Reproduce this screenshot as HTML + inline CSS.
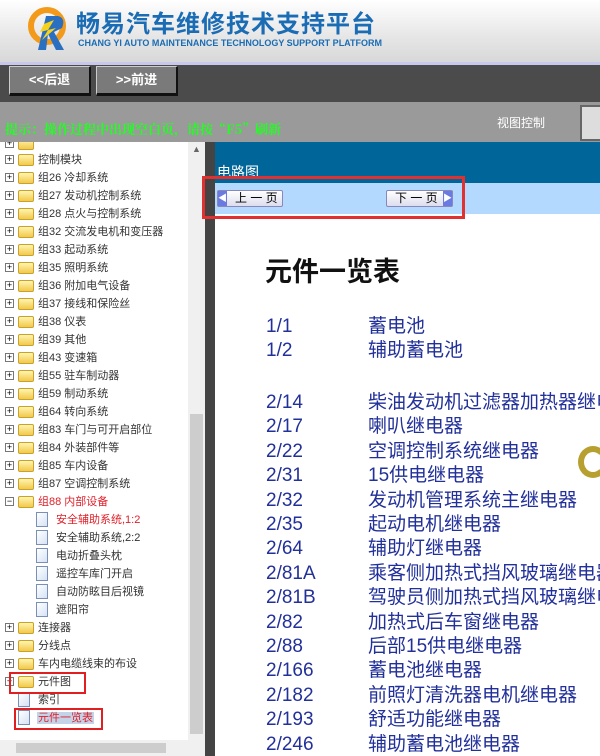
<!DOCTYPE html>
<html><head><meta charset="utf-8"><style>
*{margin:0;padding:0;box-sizing:border-box}
body{width:600px;height:756px;overflow:hidden;position:relative;font-family:"Liberation Sans","Noto Sans CJK SC",sans-serif;background:#fff}
.a{position:absolute}
#hdr{left:0;top:0;width:600px;height:62px;background:linear-gradient(#fff,#e6e6e6 60%,#d8d8d8)}
#tb{left:0;top:62px;width:600px;height:40px;background:#4b4b4b;border-top:3px solid #c8c8ee}
.btn{top:66px;height:30px;width:82px;background:#7a7a7a;border-top:1px solid #ccc;border-left:1px solid #ccc;border-right:2px solid #111;border-bottom:3px solid #111;color:#fff;font-size:13px;font-weight:bold;text-align:center;line-height:26px}
#hint{left:0;top:102px;width:600px;height:40px;background:#9a9a9a}
.tree{left:0;top:142px;width:188px;height:614px;background:#fff;overflow:hidden}
.row{position:absolute;left:0;height:18px;font-size:11px;color:#333;white-space:nowrap;line-height:18px}
.pb{position:absolute;left:5px;top:4px;width:9px;height:9px;border:1px solid #777;background:#fff;font-size:9px;line-height:7px;text-align:center;color:#000}
.fd{position:absolute;left:18px;top:3px;width:16px;height:12px;background:linear-gradient(#fff5b0,#f2c94c);border:1px solid #c9a22a;border-radius:2px}
.doc{position:absolute;width:12px;height:15px;top:1px;background:linear-gradient(135deg,#fff,#d6e2f5);border:1px solid #7a8fb5}
.lst{left:51px;font-size:19px;color:#22309a;line-height:24px}
#rc{left:215px;top:142px;width:385px;height:614px;overflow:hidden;background:#fff}
</style></head><body>
<div class="a" id="hdr">
 <svg class="a" style="left:24px;top:6px" width="46" height="46" viewBox="0 0 46 46"><circle cx="23" cy="20" r="16" fill="none" stroke="#f39a1a" stroke-width="6"/><path d="M14 44 L22 10 L34 10 Q42 12 38 22 L30 26 L40 44 L32 44 L24 28 L22 44Z" fill="#2b6fc0"/><path d="M20 18 L30 14 L24 24 L32 22 L18 34 L24 24 L16 26Z" fill="#f7d21a"/></svg>
 <div class="a" style="left:76px;top:4px;font-size:24px;font-weight:bold;color:#1a6cb5;letter-spacing:1px;font-family:'Noto Sans CJK SC',sans-serif">畅易汽车维修技术支持平台</div>
 <div class="a" style="left:78px;top:38px;font-size:9px;font-weight:bold;color:#1a6cb5;letter-spacing:0">CHANG YI AUTO MAINTENANCE TECHNOLOGY SUPPORT PLATFORM</div>
</div>
<div class="a" id="tb"></div>
<div class="a btn" style="left:9px">&lt;&lt;后退</div>
<div class="a btn" style="left:96px">&gt;&gt;前进</div>
<div class="a" id="hint">
 <div class="a" style="left:5px;top:17px;font-size:13px;font-weight:bold;color:#2f2;font-family:'Noto Serif CJK SC',serif">提示：操作过程中出现空白页，请按“F5”刷新</div>
 <div class="a" style="left:497px;top:12px;font-size:12px;color:#fff">视图控制</div>
 <div class="a" style="left:580px;top:3px;width:20px;height:36px;background:#ddd;border:2px solid #666;border-right:none"></div>
</div>
<div class="a tree">
<div class="row" style="top:-7px"><span class="pb">+</span><span class="fd"></span></div>
<div class="row" style="top:9px"><span class="pb">+</span><span class="fd"></span><span style="margin-left:38px">控制模块</span></div>
<div class="row" style="top:27px"><span class="pb">+</span><span class="fd"></span><span style="margin-left:38px">组26 冷却系统</span></div>
<div class="row" style="top:45px"><span class="pb">+</span><span class="fd"></span><span style="margin-left:38px">组27 发动机控制系统</span></div>
<div class="row" style="top:63px"><span class="pb">+</span><span class="fd"></span><span style="margin-left:38px">组28 点火与控制系统</span></div>
<div class="row" style="top:81px"><span class="pb">+</span><span class="fd"></span><span style="margin-left:38px">组32 交流发电机和变压器</span></div>
<div class="row" style="top:99px"><span class="pb">+</span><span class="fd"></span><span style="margin-left:38px">组33 起动系统</span></div>
<div class="row" style="top:117px"><span class="pb">+</span><span class="fd"></span><span style="margin-left:38px">组35 照明系统</span></div>
<div class="row" style="top:135px"><span class="pb">+</span><span class="fd"></span><span style="margin-left:38px">组36 附加电气设备</span></div>
<div class="row" style="top:153px"><span class="pb">+</span><span class="fd"></span><span style="margin-left:38px">组37 接线和保险丝</span></div>
<div class="row" style="top:171px"><span class="pb">+</span><span class="fd"></span><span style="margin-left:38px">组38 仪表</span></div>
<div class="row" style="top:189px"><span class="pb">+</span><span class="fd"></span><span style="margin-left:38px">组39 其他</span></div>
<div class="row" style="top:207px"><span class="pb">+</span><span class="fd"></span><span style="margin-left:38px">组43 变速箱</span></div>
<div class="row" style="top:225px"><span class="pb">+</span><span class="fd"></span><span style="margin-left:38px">组55 驻车制动器</span></div>
<div class="row" style="top:243px"><span class="pb">+</span><span class="fd"></span><span style="margin-left:38px">组59 制动系统</span></div>
<div class="row" style="top:261px"><span class="pb">+</span><span class="fd"></span><span style="margin-left:38px">组64 转向系统</span></div>
<div class="row" style="top:279px"><span class="pb">+</span><span class="fd"></span><span style="margin-left:38px">组83 车门与可开启部位</span></div>
<div class="row" style="top:297px"><span class="pb">+</span><span class="fd"></span><span style="margin-left:38px">组84 外装部件等</span></div>
<div class="row" style="top:315px"><span class="pb">+</span><span class="fd"></span><span style="margin-left:38px">组85 车内设备</span></div>
<div class="row" style="top:333px"><span class="pb">+</span><span class="fd"></span><span style="margin-left:38px">组87 空调控制系统</span></div>
<div class="row" style="top:351px;color:#e0202a"><span class="pb">−</span><span class="fd"></span><span style="margin-left:38px">组88 内部设备</span></div>
<div class="row" style="top:369px;color:#e0202a"><span class="doc" style="left:36px"></span><span style="margin-left:56px">安全辅助系统,1:2</span></div>
<div class="row" style="top:387px"><span class="doc" style="left:36px"></span><span style="margin-left:56px">安全辅助系统,2:2</span></div>
<div class="row" style="top:405px"><span class="doc" style="left:36px"></span><span style="margin-left:56px">电动折叠头枕</span></div>
<div class="row" style="top:423px"><span class="doc" style="left:36px"></span><span style="margin-left:56px">遥控车库门开启</span></div>
<div class="row" style="top:441px"><span class="doc" style="left:36px"></span><span style="margin-left:56px">自动防眩目后视镜</span></div>
<div class="row" style="top:459px"><span class="doc" style="left:36px"></span><span style="margin-left:56px">遮阳帘</span></div>
<div class="row" style="top:477px"><span class="pb">+</span><span class="fd"></span><span style="margin-left:38px">连接器</span></div>
<div class="row" style="top:495px"><span class="pb">+</span><span class="fd"></span><span style="margin-left:38px">分线点</span></div>
<div class="row" style="top:513px"><span class="pb">+</span><span class="fd"></span><span style="margin-left:38px">车内电缆线束的布设</span></div>
<div class="row" style="top:531px"><span class="pb">+</span><span class="fd"></span><span style="margin-left:38px">元件图</span></div>
<div class="row" style="top:549px"><span class="doc" style="left:18px"></span><span style="margin-left:38px">索引</span></div>
<div class="row" style="top:567px;color:#e0202a"><span class="doc" style="left:18px"></span><span style="margin-left:37px;background:#c5d3e8;padding:0 1px">元件一览表</span></div>
<div class="a" style="left:9px;top:530px;width:77px;height:22px;border:2px solid #e02020"></div>
<div class="a" style="left:14px;top:566px;width:89px;height:22px;border:2px solid #e02020"></div>
<div class="a" style="left:0;top:598px;width:188px;height:16px;background:#f0f0f0"><div class="a" style="left:16px;top:3px;width:150px;height:10px;background:#cdcdcd"></div></div>
</div>
<div class="a" style="left:188px;top:142px;width:17px;height:614px;background:#f0f0f0"><div class="a" style="left:2px;top:272px;width:13px;height:320px;background:#cdcdcd"></div><div class="a" style="left:4px;top:2px;color:#666;font-size:9px">▲</div></div>
<div class="a" style="left:205px;top:142px;width:10px;height:614px;background:#444"></div>
<div class="a" id="rc">
 <div class="a" style="left:0;top:0;width:385px;height:41px;background:#006699"><div class="a" style="left:2px;top:20px;color:#fff;font-size:14px">电路图</div></div>
 <div class="a" style="left:0;top:41px;width:385px;height:31px;background:#b3d9ff"></div>
 <div class="a" style="left:2px;top:48px;width:66px;height:17px;background:linear-gradient(#fff,#dde);border:1px solid #8888bb;border-radius:2px;font-size:12px;line-height:15px;padding-left:17px"><span class="a" style="left:0;top:0;width:9px;height:15px;background:#6a7ae0;color:#fff;font-size:9px">◀</span>上 一 页</div>
 <div class="a" style="left:171px;top:48px;width:67px;height:17px;background:linear-gradient(#fff,#dde);border:1px solid #8888bb;border-radius:2px;font-size:12px;line-height:15px;padding-left:8px">下 一 页<span class="a" style="right:0;top:0;width:9px;height:15px;background:#6a7ae0;color:#fff;font-size:9px">▶</span></div>
 <div class="a" style="left:50px;top:108px;font-size:27px;font-weight:bold;color:#111">元件一览表</div>
 <div class="a lst" style="top:173px">1/1<br>1/2</div>
 <div class="a lst" style="left:153px;top:173px">蓄电池<br>辅助蓄电池</div>
 <div class="a lst" style="top:249px;line-height:24.4px">2/14<br>2/17<br>2/22<br>2/31<br>2/32<br>2/35<br>2/64<br>2/81A<br>2/81B<br>2/82<br>2/88<br>2/166<br>2/182<br>2/193<br>2/246</div>
 <div class="a lst" style="left:153px;top:249px;line-height:24.4px;white-space:nowrap">柴油发动机过滤器加热器继电器<br>喇叭继电器<br>空调控制系统继电器<br>15供电继电器<br>发动机管理系统主继电器<br>起动电机继电器<br>辅助灯继电器<br>乘客侧加热式挡风玻璃继电器<br>驾驶员侧加热式挡风玻璃继电器<br>加热式后车窗继电器<br>后部15供电继电器<br>蓄电池继电器<br>前照灯清洗器电机继电器<br>舒适功能继电器<br>辅助蓄电池继电器</div>
 <div class="a" style="left:363px;top:304px;width:30px;height:32px;border-radius:50%;border:6px solid #b8a030;border-right-color:transparent"></div>
</div>
<div class="a" style="left:202px;top:176px;width:263px;height:43px;border:3px solid #e03030"></div>
</body></html>
